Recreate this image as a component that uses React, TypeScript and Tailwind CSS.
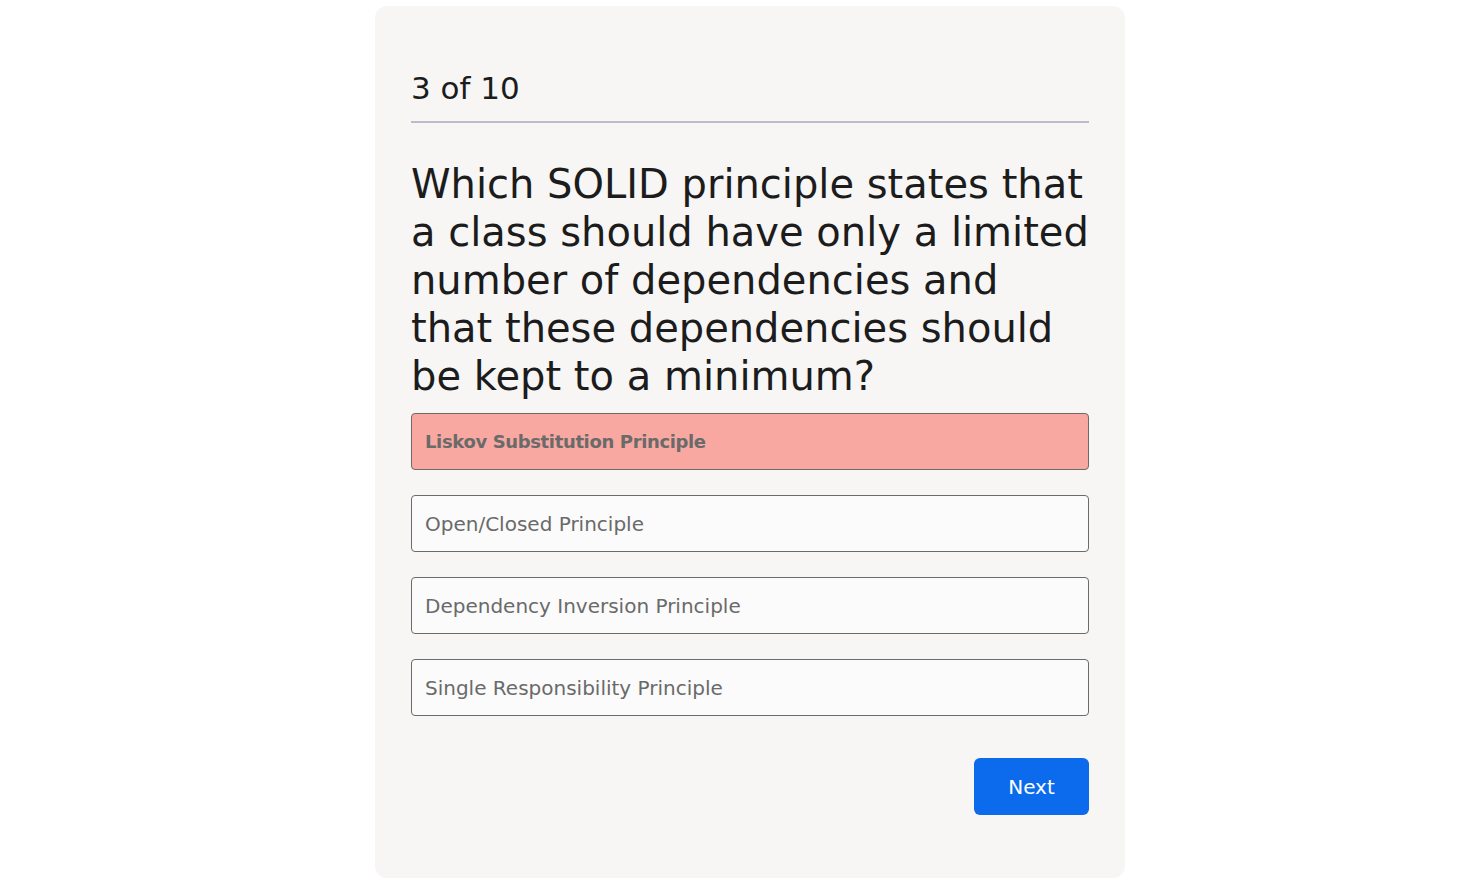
import React from "react";

const options = [
  "Liskov Substitution Principle",
  "Open/Closed Principle",
  "Dependency Inversion Principle",
  "Single Responsibility Principle",
];

const lines = [
  "Which SOLID principle states that",
  "a class should have only a limited",
  "number of dependencies and",
  "that these dependencies should",
  "be kept to a minimum?",
];

export default function App() {
  const selected = 0;

  return (
    <div className="flex min-h-screen justify-center bg-white pt-[6px] pl-[18px] font-['DejaVu_Sans',sans-serif]">
      <div className="flex h-[872px] w-[750px] flex-col rounded-xl bg-[#f7f6f5] px-9 pt-[60px]">
        <h2 className="border-b-2 border-[#bdbccf] pb-[11px] text-[31px] leading-[44px] text-[#1c1c1c]">
          3 of 10
        </h2>
        <p className="mt-[37px] text-[40px] leading-[48px] text-[#1c1c1c]">
          {lines.map((line, i) => (
            <span key={i} className="block whitespace-nowrap">
              {line}
            </span>
          ))}
        </p>
        <div className="mt-[13px] flex flex-col gap-[25px]">
          {options.map((opt, i) => (
            <button
              key={opt}
              className={
                i === selected
                  ? "flex h-[57px] items-center rounded border border-[#6b6b6b] bg-[#f8a8a0] px-[13px] text-left text-[18px] font-bold tracking-[-0.02em] text-[#6a6a6a]"
                  : "flex h-[57px] items-center rounded border border-[#6b6b6b] bg-[#fbfbfb] px-[13px] text-left text-[20px] text-[#6a6a6a]"
              }
            >
              {opt}
            </button>
          ))}
        </div>
        <div className="mt-[42px] flex justify-end">
          <button className="h-[57px] w-[115px] rounded-md bg-[#0b6bec] text-[20px] text-white">
            Next
          </button>
        </div>
      </div>
    </div>
  );
}
